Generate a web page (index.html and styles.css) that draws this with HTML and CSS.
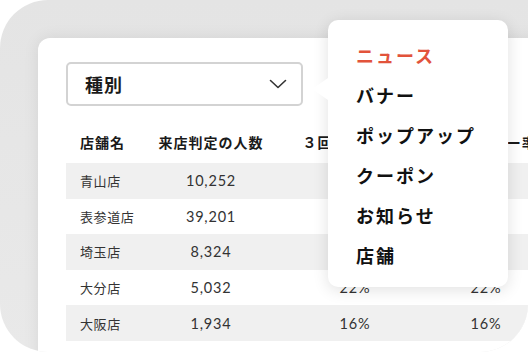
FILE: index.html
```html
<!DOCTYPE html>
<html lang="ja">
<head>
  <meta charset="UTF-8">
  <title>種別</title>
  <link rel="stylesheet" href="styles.css">
</head>
<body>
  <div class="frame">
    <div class="card">
      <div class="select">
        <span class="select-label">種別</span>
        <svg class="chevron" width="18" height="10" viewBox="0 0 18 10">
          <path d="M1.5 1.5 L9 8.5 L16.5 1.5" fill="none" stroke="#333" stroke-width="1.6" stroke-linecap="round" stroke-linejoin="round"/>
        </svg>
      </div>

      <table class="stores">
        <colgroup>
          <col class="c-name">
          <col class="c-count">
          <col class="c-rate">
          <col class="c-new">
        </colgroup>
        <thead>
          <tr>
            <th class="left">店舗名</th>
            <th>来店判定の人数</th>
            <th>３回以上来店率</th>
            <th class="th-new">ユーザー率</th>
          </tr>
        </thead>
        <tbody>
          <!-- rows 1-3: rate cells sit under the open menu -->
          <tr><td class="left">青山店</td><td class="num">10,252</td><td></td><td></td></tr>
          <tr><td class="left">表参道店</td><td class="num">39,201</td><td></td><td></td></tr>
          <tr><td class="left">埼玉店</td><td class="num">8,324</td><td></td><td></td></tr>
          <tr><td class="left">大分店</td><td class="num">5,032</td><td class="num">22%</td><td class="num">22%</td></tr>
          <tr><td class="left">大阪店</td><td class="num">1,934</td><td class="num">16%</td><td class="num">16%</td></tr>
        </tbody>
      </table>
    </div>

    <ul class="menu">
      <li class="active">ニュース</li>
      <li>バナー</li>
      <li>ポップアップ</li>
      <li>クーポン</li>
      <li>お知らせ</li>
      <li>店舗</li>
    </ul>
  </div>
</body>
</html>
```

FILE: styles.css
```css
* {
  box-sizing: border-box;
}

body {
  margin: 0;
  background: #fff;
  font-family: "Noto Sans CJK JP", "Noto Sans", sans-serif;
  color: #222;
}

.frame {
  position: relative;
  width: 528px;
  height: 352px;
  padding: 38px 0 0 38px;
  background: linear-gradient(to bottom, #e4e4e4, #e9e9e9);
  border-radius: 48px 0 48px 48px;
  overflow: hidden;
}

.card {
  width: 520px;
  height: 340px;
  padding: 24px 0 0 28px;
  background: #fff;
  border-radius: 12px 0 0 0;
  box-shadow: 0 0 16px rgba(0, 0, 0, 0.08);
}

.select {
  display: flex;
  align-items: center;
  justify-content: space-between;
  width: 237px;
  height: 44px;
  padding: 0 14px 0 17px;
  border: 2px solid #d3d3d3;
  border-radius: 5px;
}

.select-label {
  font-size: 18px;
  font-weight: 700;
  letter-spacing: 1px;
  color: #1a1a1a;
}

.stores {
  margin-top: 15px;
  width: 462px;
  border-collapse: collapse;
  table-layout: fixed;
}

.c-name { width: 90px; }
.c-count { width: 110px; }
.c-rate { width: 178px; }
.c-new { width: 84px; }

.stores th {
  height: 42px;
  padding: 0;
  font-size: 14px;
  font-weight: 700;
  letter-spacing: 1px;
  color: #1a1a1a;
  text-align: center;
  white-space: nowrap;
}

.stores td {
  height: 35.6px;
  padding: 0;
  font-size: 13px;
  letter-spacing: 0.6px;
  color: #333;
  text-align: center;
  white-space: nowrap;
}

.stores td.num {
  font-family: Lato, "Noto Sans", sans-serif;
  font-size: 14.5px;
  letter-spacing: 0.8px;
  color: #333;
}

.stores .left {
  text-align: left;
  padding-left: 14px;
}

.stores .th-new {
  text-align: left;
  padding-left: 18px;
}

.stores tbody tr:nth-child(odd) {
  background: #f0f0f0;
}

.menu {
  position: absolute;
  left: 328px;
  top: 20px;
  width: 180px;
  margin: 0;
  padding: 15px 0 12px 28px;
  list-style: none;
  background: #fff;
  border-radius: 10px;
  box-shadow: 0 3px 16px rgba(0, 0, 0, 0.12);
}

.menu::before {
  content: "";
  position: absolute;
  left: -16px;
  top: 58px;
  border-top: 11px solid transparent;
  border-bottom: 11px solid transparent;
  border-right: 16px solid #fff;
}

.menu li {
  height: 40px;
  line-height: 40px;
  font-size: 18px;
  font-weight: 700;
  letter-spacing: 2px;
  color: #111;
}

.menu li.active {
  color: #e2533b;
}
```
